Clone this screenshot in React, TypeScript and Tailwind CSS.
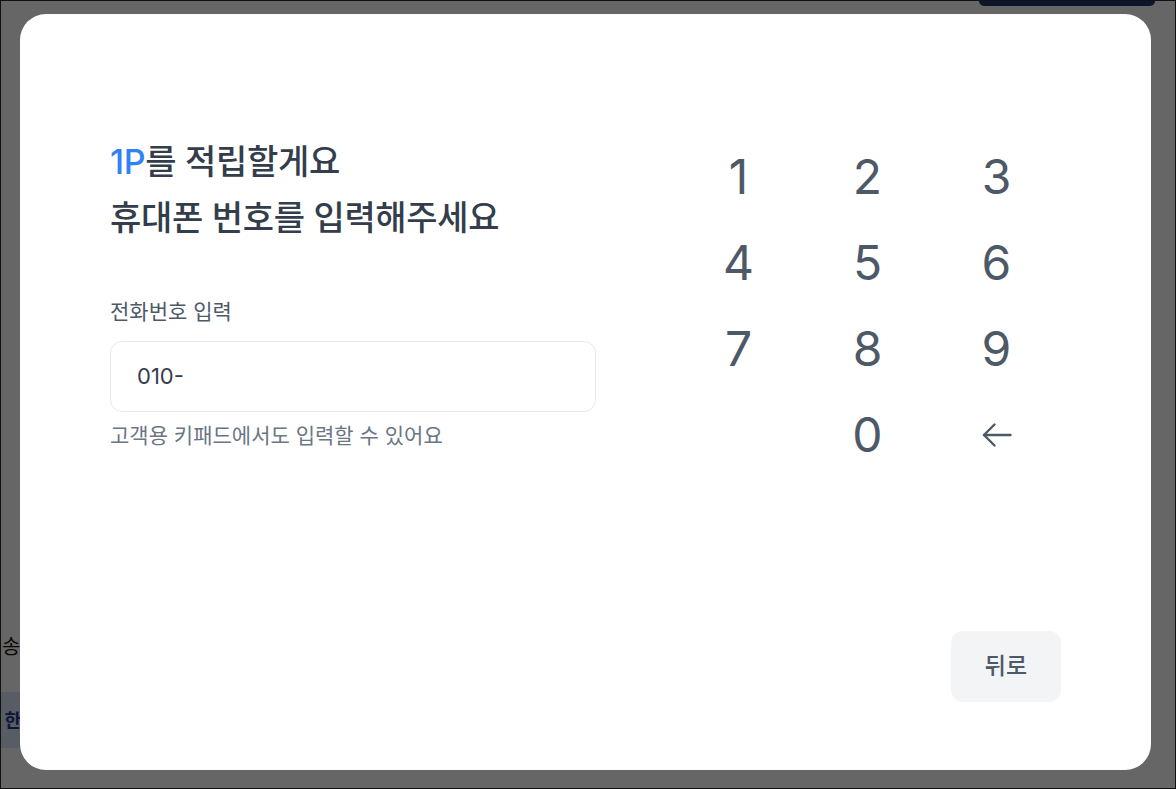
import { useState } from 'react';

const font = { fontFamily: '"Inter", "Noto Sans CJK KR", sans-serif' };

const keys = ['1', '2', '3', '4', '5', '6', '7', '8', '9', '', '0', 'back'];

const BackArrow = () => (
  <svg width="30" height="24" viewBox="0 0 30 24" fill="none" stroke="#4e5968" strokeWidth="2.4" strokeLinecap="round" strokeLinejoin="round">
    <path d="M28.5 12H2" />
    <path d="M12.5 1.5L2 12l10.5 10.5" />
  </svg>
);

const Background = () => (
  <div className="h-full w-full bg-white flex flex-col">
    <div className="flex justify-end pr-[20px]">
      <div className="w-[176px] h-[5px] rounded-b-[8px] bg-[#1e3a6e]" />
    </div>
    <div className="flex-1" />
    <div className="pb-[40px] flex flex-col gap-[30px]">
      <span className="text-[20px] text-[#111] pl-[1px]">송</span>
      <div className="w-[60px] h-[56px] bg-[#dbe7fb] flex items-center justify-end pr-[40px] text-[#1e3a8a] text-[18px] font-semibold">한</div>
    </div>
  </div>
);

const App = () => {
  const [phone, setPhone] = useState('010-');

  const press = (k: string) => {
    if (k === 'back') setPhone((p) => (p.length > 4 ? p.slice(0, -1) : p));
    else if (k) setPhone((p) => p + k);
  };

  return (
    <div className="relative w-[1176px] h-[789px] overflow-hidden border border-[#111]" style={font}>
      <Background />
      <div className="absolute inset-0 bg-black/60 pt-[13px] pl-[19px]">
        <div className="w-[1131px] h-[756px] bg-white rounded-[26px] flex flex-col pt-[120px] pb-[68px] px-[90px]">
          <div className="flex justify-between">
            <div className="w-[486px] flex flex-col">
              <h2 className="text-[34px] leading-[56px] font-medium text-[#333d4b] tracking-[-0.3px]">
                <span className="text-[#3182f6]">1P</span>를 적립할게요
                <br />
                휴대폰 번호를 입력해주세요
              </h2>
              <label className="mt-[50px] text-[21px] leading-[32px] text-[#4e5968]">전화번호 입력</label>
              <div className="mt-[13px] h-[71px] rounded-[12px] border border-[#e5e8eb] flex items-center px-[26px] text-[22px] text-[#333d4b]">
                {phone}
              </div>
              <p className="mt-[8px] text-[21px] leading-[32px] text-[#6b7684]">고객용 키패드에서도 입력할 수 있어요</p>
            </div>
            <div className="w-[387px] grid grid-cols-3">
              {keys.map((k, i) => (
                <button
                  key={i}
                  onClick={() => press(k)}
                  className="h-[86px] flex items-center justify-center text-[48px] text-[#4e5968]"
                >
                  {k === 'back' ? <BackArrow /> : k}
                </button>
              ))}
            </div>
          </div>
          <div className="flex-1" />
          <div className="flex justify-end">
            <button className="w-[110px] h-[71px] rounded-[12px] bg-[#f2f4f6] text-[23px] font-medium text-[#4e5968]">
              뒤로
            </button>
          </div>
        </div>
      </div>
    </div>
  );
};

export default App;
